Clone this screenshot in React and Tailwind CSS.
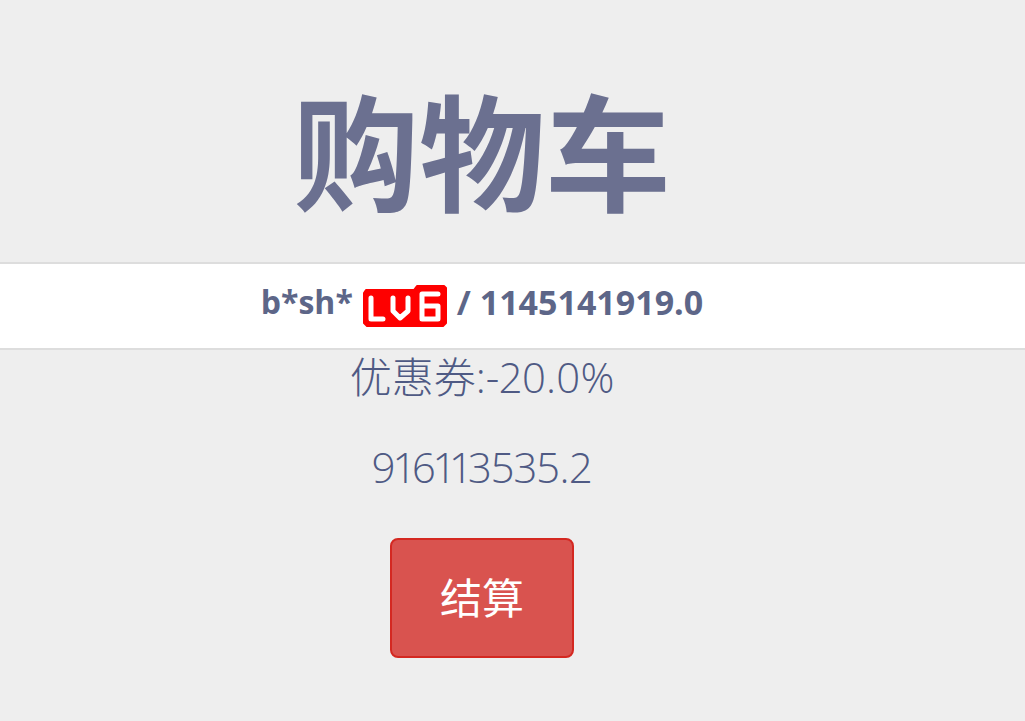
export default function App() {
  return (
    <main className="min-h-screen bg-[#eeeeee] pt-[72px] pb-16 text-[#5d6688] font-['Open_Sans','Noto_Sans_CJK_SC',sans-serif]">
      <h1 className="pr-[61px] text-center text-[126px] leading-[150px] font-bold text-[#6b7090] font-['Noto_Sans_CJK_SC',sans-serif]">购物车</h1>
      <div className="mt-10 flex h-[88px] items-center justify-center gap-[10px] border-y-2 border-[#dddddd] bg-white pr-[61px] pb-2 text-[34px] font-bold">
        <span className="text-[32px]">b*sh*</span>
        <svg className="mt-2 h-[42px] w-[84px]" viewBox="0 0 84 42" role="img" aria-label="LV6">
          <path fill="#fe0000" stroke="#fe0000" strokeWidth="2" strokeLinejoin="round" d="M3 5H51L54 1H81L83 3V38L80 41H4L1 38V8Z" />
          <path fill="none" stroke="#fff" strokeWidth="5" strokeLinecap="round" strokeLinejoin="round" d="M8 13V34H20M30 13V26L37 33L45 26V13M75 9H59V34H75V21H59" />
        </svg>
        <span>/ 1145141919.0</span>
      </div>
      <p className="-mt-[3px] pr-[61px] text-center text-[42px] leading-[60px] font-light proportional-nums text-[#4f5a84]">优惠券:-20.0%</p>
      <p className="mt-[30px] pr-[61px] text-center text-[42px] leading-[60px] font-light proportional-nums text-[#4f5a84]">916113535.2</p>
      <div className="mt-[41px] flex justify-center pr-[61px]">
        <button type="button" className="rounded-lg border-2 border-[#d42821] bg-[#d9534f] px-12 py-7 text-[42px] leading-[60px] text-white">结算</button>
      </div>
    </main>
  );
}
